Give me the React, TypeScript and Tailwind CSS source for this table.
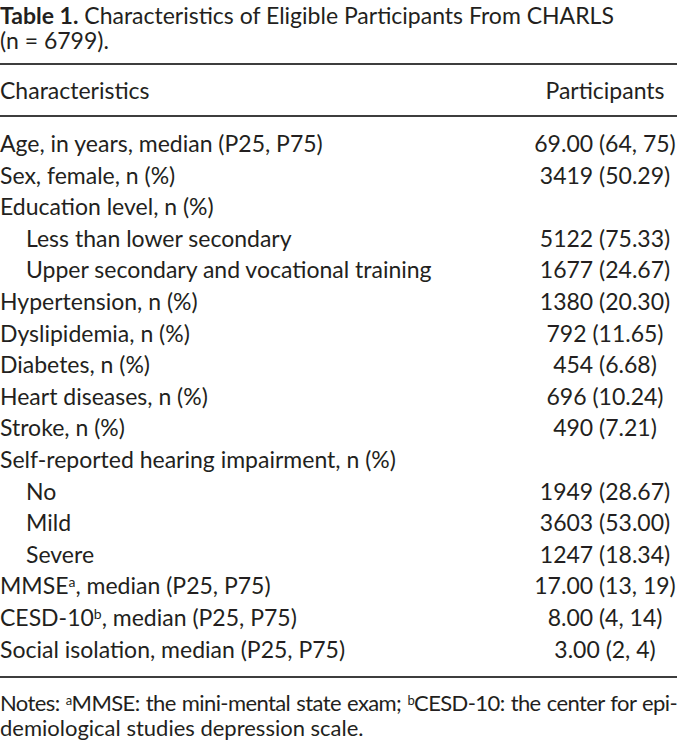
import type { ReactNode } from "react";

type Row = { label: ReactNode; value?: string; indent?: boolean };

const rows: Row[] = [
  { label: "Age, in years, median (P25, P75)", value: "69.00 (64, 75)" },
  { label: "Sex, female, n (%)", value: "3419 (50.29)" },
  { label: "Education level, n (%)" },
  { label: "Less than lower secondary", value: "5122 (75.33)", indent: true },
  { label: "Upper secondary and vocational training", value: "1677 (24.67)", indent: true },
  { label: "Hypertension, n (%)", value: "1380 (20.30)" },
  { label: "Dyslipidemia, n (%)", value: "792 (11.65)" },
  { label: "Diabetes, n (%)", value: "454 (6.68)" },
  { label: "Heart diseases, n (%)", value: "696 (10.24)" },
  { label: "Stroke, n (%)", value: "490 (7.21)" },
  { label: "Self-reported hearing impairment, n (%)" },
  { label: "No", value: "1949 (28.67)", indent: true },
  { label: "Mild", value: "3603 (53.00)", indent: true },
  { label: "Severe", value: "1247 (18.34)", indent: true },
  {
    label: (
      <>
        MMSE<sup className="text-[14px]">a</sup>, median (P25, P75)
      </>
    ),
    value: "17.00 (13, 19)",
  },
  {
    label: (
      <>
        CESD-10<sup className="text-[14px]">b</sup>, median (P25, P75)
      </>
    ),
    value: "8.00 (4, 14)",
  },
  { label: "Social isolation, median (P25, P75)", value: "3.00 (2, 4)" },
];

export default function App() {
  return (
    <div className="w-[677px] h-[741px] overflow-hidden bg-white text-[#231f20] font-['Lato',sans-serif] text-[23px]">
      {/* Caption */}
      <p className="pt-[3px] leading-[25px]">
        <span className="font-bold">Table 1.</span> Characteristics of Eligible Participants From CHARLS
        <br />
        (n = 6799).
      </p>

      {/* Table */}
      <div className="mt-[10px] border-y-2 border-[#3d3d3d]">
        <div className="grid grid-cols-[1fr_144px] h-[52px] items-center border-b-2 border-[#3d3d3d]">
          <span>Characteristics</span>
          <span className="text-center">Participants</span>
        </div>
        <div className="py-[11px]">
          {rows.map((r, i) => (
            <div key={i} className="grid grid-cols-[1fr_144px] leading-[31.6px]">
              <span className={r.indent ? "pl-[26px]" : ""}>{r.label}</span>
              <span className="text-center">{r.value}</span>
            </div>
          ))}
        </div>
      </div>

      {/* Notes */}
      <div className="pt-[12px] leading-[25px] text-[22px]">
        <p className="whitespace-nowrap text-justify [text-align-last:justify] tracking-[-0.6px] [word-spacing:-1px]">
          Notes: <sup className="text-[13px]">a</sup>MMSE: the mini-mental state exam;{" "}
          <sup className="text-[13px]">b</sup>CESD-10: the center for epi-
        </p>
        <p>demiological studies depression scale.</p>
      </div>
    </div>
  );
}
